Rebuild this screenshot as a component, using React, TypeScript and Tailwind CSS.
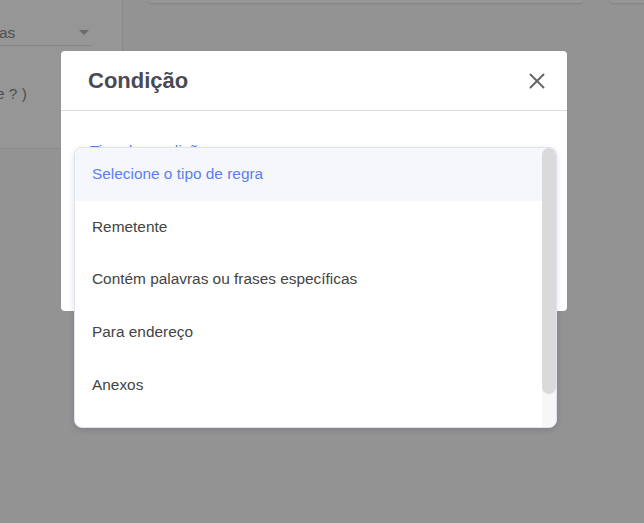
import { X } from 'lucide-react';

const options = [
  'Selecione o tipo de regra',
  'Remetente',
  'Contém palavras ou frases específicas',
  'Para endereço',
  'Anexos',
];

export default function App() {
  return (
    <div
      className="relative w-[644px] h-[523px] overflow-hidden bg-[#939393]"
      style={{ fontFamily: '"Liberation Sans", Arial, sans-serif' }}
    >
      {/* Dimmed page behind the dialog */}
      <div className="flex items-start">
        <div className="w-[123px] h-[149px] overflow-hidden bg-[#969696] border-r border-b border-[#8b8b8b]">
          <div className="mt-[20px] w-[92px] h-[26px] flex items-center justify-between border-b border-[#868686]">
            <span className="text-[15.4px] text-[#4f4f4f] ml-[-1px]">as</span>
            <span className="mr-[3px] w-0 h-0 border-l-[5px] border-r-[5px] border-t-[5px] border-l-transparent border-r-transparent border-t-[#6a6a6a]" />
          </div>
          <div className="mt-[36px] text-[15.4px] text-[#4f4f4f] ml-[-4px]">e ? )</div>
        </div>
        <div className="ml-[25px] w-[435px] h-[3px] rounded-b-lg bg-[#969696] shadow-[0_1px_2px_rgba(0,0,0,0.12)]" />
        <div className="ml-[27px] flex-1 h-[3px] rounded-bl-lg bg-[#969696] shadow-[0_1px_2px_rgba(0,0,0,0.12)]" />
      </div>

      {/* Dialog */}
      <div className="absolute left-[61px] top-[51px] w-[506px] h-[260px] bg-white rounded-[4px]">
        <div className="h-[60px] flex items-center justify-between pl-[27px] pr-[17px] border-b border-[#dcdcdc]">
          <h2 className="text-[22px] font-bold text-[#4a4a55]">Condição</h2>
          <X className="w-[26px] h-[26px] text-[#666666]" strokeWidth={1.8} />
        </div>
        <div className="pt-[28px] pl-[29px] text-[15.4px] text-[#5b7ff0]">Tipo de condição</div>
      </div>

      {/* Open select menu */}
      <div className="absolute left-[74px] top-[147px] w-[483px] h-[281px] flex bg-white border border-[#dde3f3] rounded-lg overflow-hidden shadow-[0_2px_6px_rgba(0,0,0,0.12)]">
        <div className="flex-1 flex flex-col">
          {options.map((opt, i) => (
            <div
              key={opt}
              className={`h-[52.75px] shrink-0 flex items-center pl-[17px] pb-[2px] text-[15.4px] ${
                i === 0 ? 'bg-[#f6f7fd] text-[#5b7ff0]' : 'text-[#444444]'
              }`}
            >
              {opt}
            </div>
          ))}
        </div>
        <div className="w-[14px] bg-[#f7f7f7]">
          <div className="h-[246px] rounded-full bg-[#dadada]" />
        </div>
      </div>
    </div>
  );
}
